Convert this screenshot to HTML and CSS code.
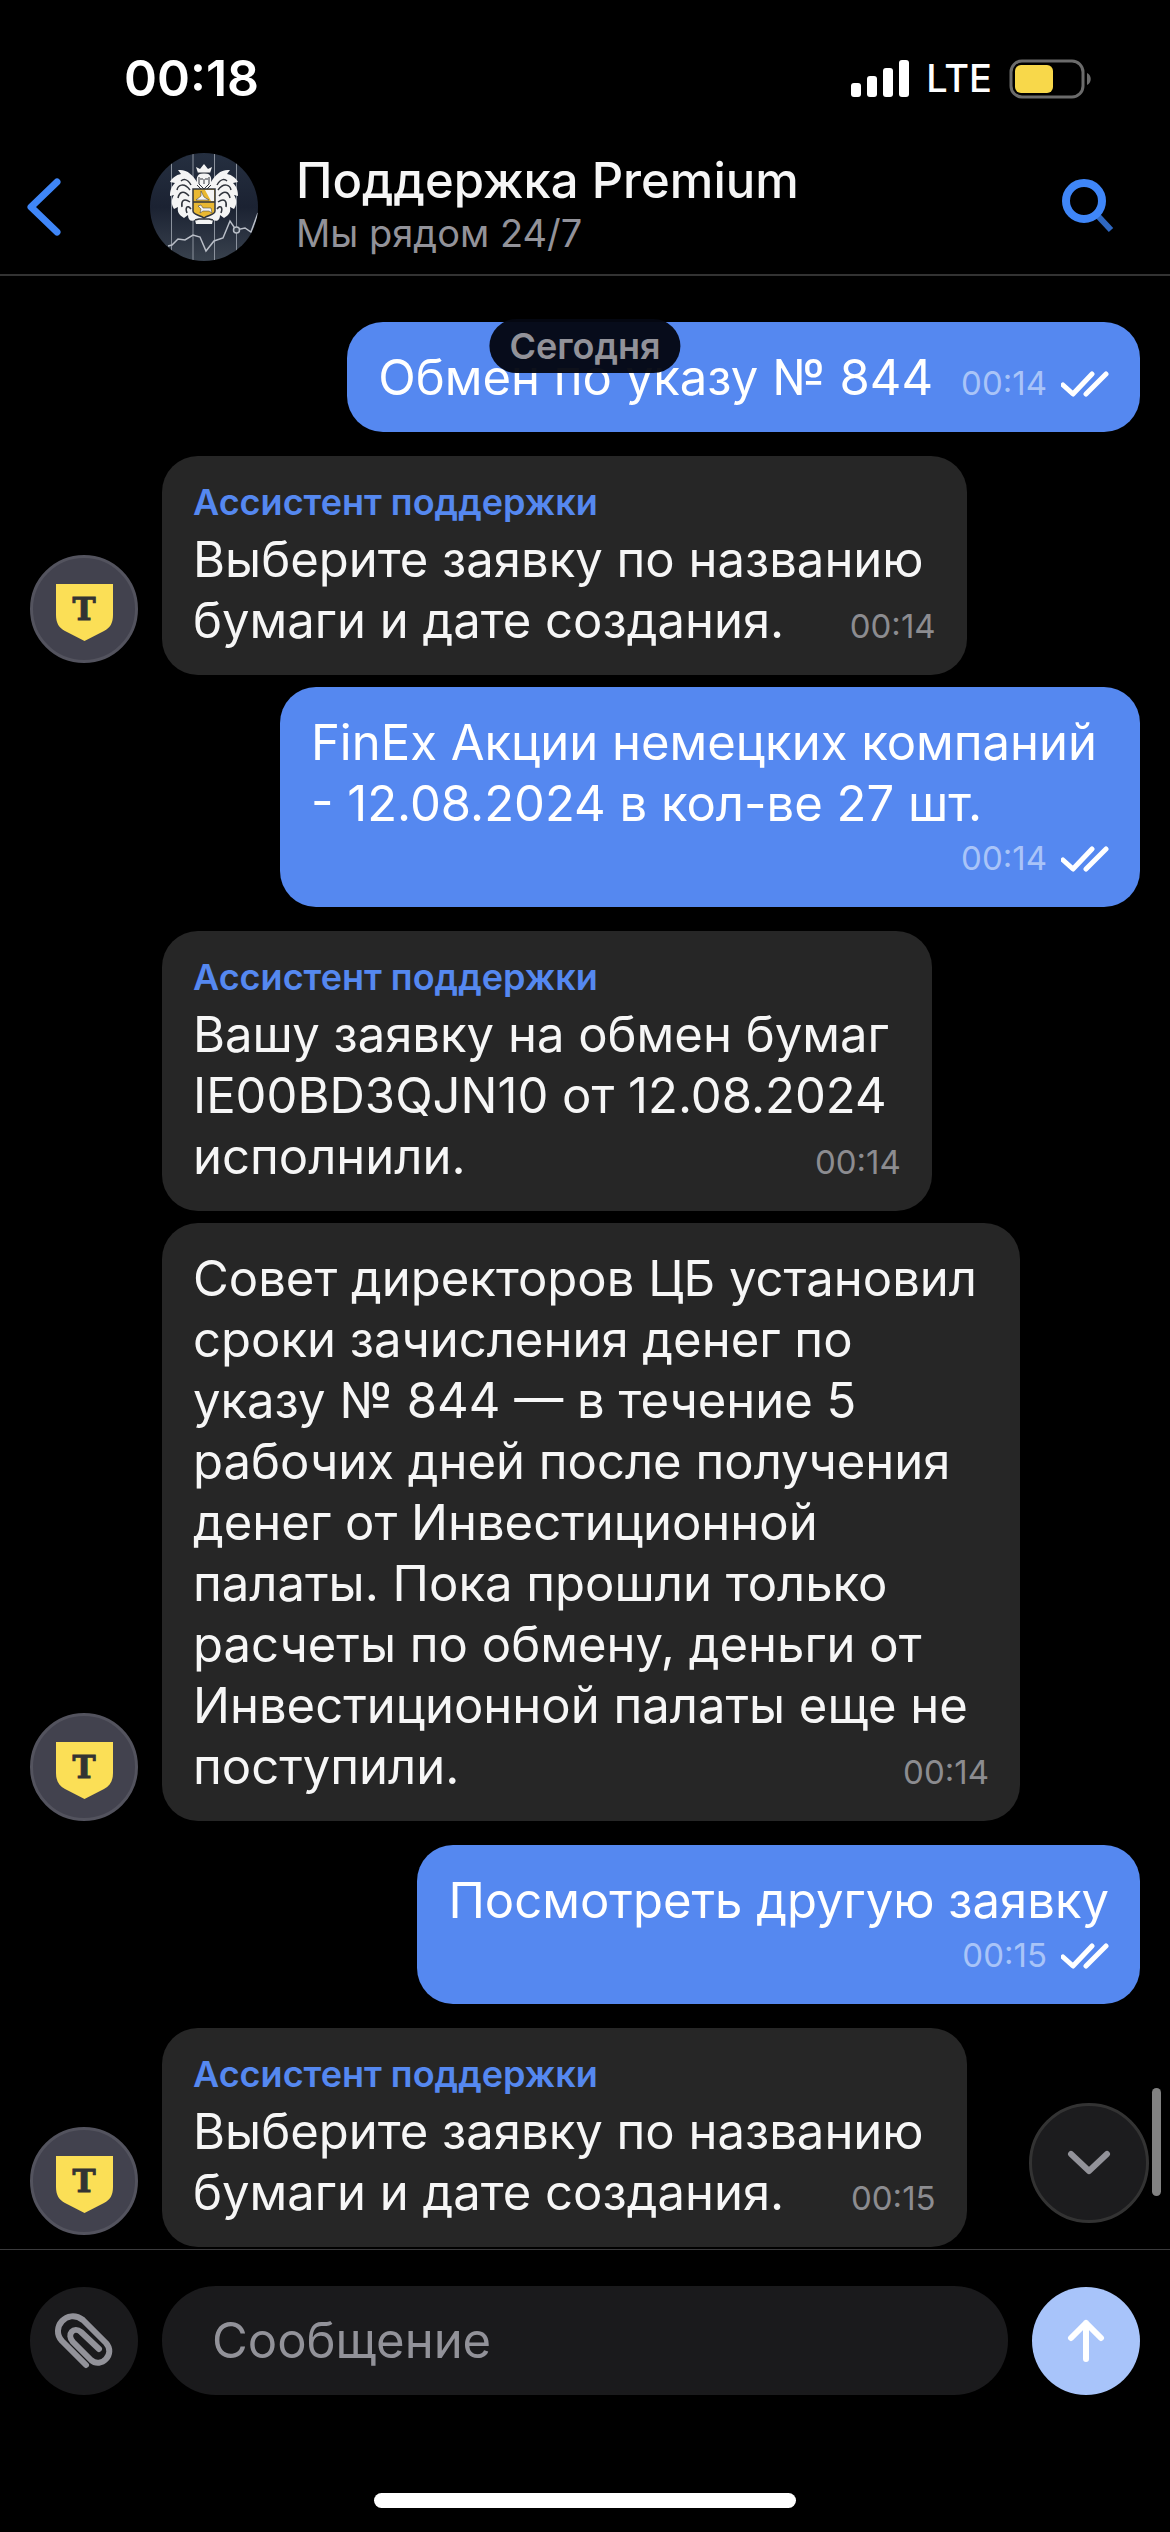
FILE: index.html
```html
<!DOCTYPE html>
<html lang="ru">
<head>
  <meta charset="UTF-8"/>
  <meta name="viewport" content="width=device-width, initial-scale=1"/>
  <title>Поддержка Premium</title>
  <link rel="stylesheet" href="styles.css">
</head>
<body>
  <!-- shared icons -->
  <svg class="defs" aria-hidden="true">
    <symbol id="ticks" viewBox="0 0 48 26">
      <path d="M2 14 L12 23 L31 3 M25 23 L45 3" fill="none" stroke="#fff" stroke-width="5" stroke-linecap="round" stroke-linejoin="round"/>
    </symbol>
    <symbol id="shield" viewBox="3 3 102 102">
      <path d="M26 29 H83 V60 C83 68 80 73 74 76 L54.500 86 L35 76 C29 73 26 68 26 60 Z" fill="#fbdf56"/>
    </symbol>
  </svg>

  <div class="status">
    <span class="clock">00:18</span>
    <div class="indicators">
      <svg width="58" height="38" viewBox="0 0 58 38" fill="#fff">
        <rect x="0" y="23" width="10" height="14" rx="3"/>
        <rect x="16" y="16" width="10" height="21" rx="3"/>
        <rect x="32" y="8" width="10" height="29" rx="3"/>
        <rect x="48" y="0" width="10" height="37" rx="3"/>
      </svg>
      <span class="network">LTE</span>
      <svg width="84" height="40" viewBox="0 0 84 40">
        <rect x="2" y="2" width="72" height="36" rx="11" fill="none" stroke="#6b6b6b" stroke-width="3"/>
        <rect x="6" y="6" width="38" height="28" rx="6" fill="#f8d84a"/>
        <path d="M78 14 C83 16 83 24 78 26 Z" fill="#6b6b6b"/>
      </svg>
    </div>
  </div>

  <header class="header">
    <button class="icon-btn back" aria-label="Назад">
      <svg width="36" height="60" viewBox="0 0 36 60"><path d="M31 5 L5 30 L31 55" fill="none" stroke="#3f86f8" stroke-width="7" stroke-linecap="round" stroke-linejoin="round"/></svg>
    </button>
    <svg class="logo" width="108" height="108" viewBox="0 0 108 108">
      <defs>
        <clipPath id="round"><circle cx="54" cy="54" r="54"/></clipPath>
        <linearGradient id="night" x1="0" y1="0" x2="0" y2="1"><stop offset="0" stop-color="#252f40"/><stop offset=".5" stop-color="#1b2232"/><stop offset="1" stop-color="#39424e"/></linearGradient>
      </defs>
      <g clip-path="url(#round)">
        <rect width="108" height="108" fill="url(#night)"/>
        <path d="M21.500 0 V108 M43 0 V108 M64.500 0 V108 M86.500 0 V108" stroke="#8b929d" stroke-width="1"/>
        <path d="M18 93 L22 92 L28 86 L35 87 L43 82 L50 84 L56 98 L64 88 L73 85 L80 68 L86 77 L95 75 L101 79 L108 60" fill="none" stroke="#b9bec7" stroke-width="1.500"/>
        <circle cx="86.500" cy="77" r="3" fill="#39424e" stroke="#b9bec7" stroke-width="1.500"/>
        <!-- mantle -->
        <path d="M54 20 C48 20 46 24 47 29 C43 22 37 16 28 17 L31 21 C26 22 22 25 20 29 L25 30 C21 34 20 38 20 43 L24 42 C21 47 21 51 24 56 L28 54 C27 59 29 62 34 65 L38 62 C38 67 41 69 45 67 L46 71 H62 L63 67 C67 69 70 67 70 62 L74 65 C79 62 81 59 80 54 L84 56 C87 51 87 47 84 42 L88 43 C88 38 87 34 83 30 L88 29 C86 25 82 22 77 21 L80 17 C71 16 65 22 61 29 C62 24 60 20 54 20 Z" fill="#f4f4f4"/>
        <path d="M41 32 C37 25 33 26 31 28 M40 37 C34 29 28 32 27 37 M39 43 C33 36 29 40 28 45 M40 49 C33 44 31 49 32 54 M41 56 C37 51 35 55 37 60 M67 32 C71 25 75 26 77 28 M68 37 C74 29 80 32 81 37 M69 43 C75 36 79 40 80 45 M68 49 C75 44 77 49 76 54 M67 56 C71 51 73 55 71 60 M45 67 L49 66 H59 L63 67" fill="none" stroke="#30343c" stroke-width="1.500"/>
        <!-- crown and face -->
        <path d="M48 20 L46 14 L50 16 L54 11 L58 16 L62 14 L60 20 Z" fill="#f4f4f4"/>
        <path d="M48 20 H60" stroke="#30343c" stroke-width="1"/>
        <path d="M49 24 V31 L54 36 L59 31 V24 M50 26 H53 M55 26 H58 M54 26 V31 M47 32 L51 36 M61 32 L57 36" fill="none" stroke="#30343c" stroke-width="1"/>
        <!-- arms -->
        <path d="M43 36 H65 V58 C65 62 58 62 54 65 C50 62 43 62 43 58 Z" fill="#e9b832" stroke="#30343c" stroke-width="1.500"/>
        <path d="M55 37 H64 V48 H61 Z" fill="#f4f4f4"/>
        <path d="M43 49 H65" stroke="#30343c" stroke-width="1.500"/>
        <path d="M46 47 L51 43 L51 38 L54 44 L59 47 Z M48 53 L51 52 L53 55 L61 55 L62 60 L59 58 L53 58 L50 60 L51 56 Z" fill="#f4f4f4" stroke="#30343c" stroke-width=".5"/>
      </g>
    </svg>
    <div class="who">
      <h1>Поддержка Premium</h1>
      <p>Мы рядом 24/7</p>
    </div>
    <button class="icon-btn" aria-label="Поиск">
      <svg width="54" height="56" viewBox="0 0 54 56" fill="none" stroke="#3f86f8">
        <path d="M36 37 L49 51" stroke="#2f68c2" stroke-width="6"/>
        <circle cx="22" cy="22" r="18" stroke-width="8"/>
      </svg>
    </button>
  </header>

  <main class="chat">
    <div class="date">Сегодня</div>

    <div class="row out">
      <div class="bubble">
        <div class="last">Обмен по указу № 844 <span class="meta">00:14 <svg class="ticks"><use href="#ticks"/></svg></span></div>
      </div>
    </div>

    <div class="row in close">
      <div class="avatar"><svg><use href="#shield"/></svg><b>T</b></div>
      <div class="bubble">
        <div class="name">Ассистент поддержки</div>
        <div class="text">Выберите заявку по названию</div>
        <div class="last">бумаги и дате создания. <span class="meta">00:14</span></div>
      </div>
    </div>

    <div class="row out">
      <div class="bubble">
        <div class="text">FinEx Акции немецких компаний<br>
        - 12.08.2024 в кол-ве 27 шт.</div>
        <div class="meta below">00:14 <svg class="ticks"><use href="#ticks"/></svg></div>
      </div>
    </div>

    <div class="row in close">
      <div class="bubble">
        <div class="name">Ассистент поддержки</div>
        <div class="text">Вашу заявку на обмен бумаг<br>
        IE00BD3QJN10 от 12.08.2024</div>
        <div class="last">исполнили. <span class="meta">00:14</span></div>
      </div>
    </div>

    <div class="row in grouped">
      <div class="avatar"><svg><use href="#shield"/></svg><b>T</b></div>
      <div class="bubble">
        <div class="text">Совет директоров ЦБ установил<br>
        сроки зачисления денег по<br>
        указу № 844 — в течение 5<br>
        рабочих дней после получения<br>
        денег от Инвестиционной<br>
        палаты. Пока прошли только<br>
        расчеты по обмену, деньги от<br>
        Инвестиционной палаты еще не</div>
        <div class="last">поступили. <span class="meta">00:14</span></div>
      </div>
    </div>

    <div class="row out">
      <div class="bubble">
        Посмотреть другую заявку
        <div class="meta below">00:15 <svg class="ticks"><use href="#ticks"/></svg></div>
      </div>
    </div>

    <div class="row in newest">
      <div class="avatar"><svg><use href="#shield"/></svg><b>T</b></div>
      <div class="bubble">
        <div class="name">Ассистент поддержки</div>
        <div class="text">Выберите заявку по названию</div>
        <div class="last">бумаги и дате создания. <span class="meta">00:15</span></div>
      </div>
    </div>

    <button class="to-bottom" aria-label="Вниз">
      <svg width="44" height="26" viewBox="0 0 44 26"><path d="M4 4 L22 21 L40 4" fill="none" stroke="#929299" stroke-width="6" stroke-linecap="round" stroke-linejoin="round"/></svg>
    </button>
    <div class="scrollbar"></div>
  </main>

  <form class="composer">
    <button type="button" class="round" aria-label="Прикрепить файл">
      <svg width="60" height="60" viewBox="0 0 60 60"><path d="M32 54 L8 30 C-4 17 13 -3 29 9 L52 32 C62 43 47 58 37 49 L19 31 C12 23 20 15 27 21 L45 38" fill="none" stroke="#929299" stroke-width="6" stroke-linecap="round" stroke-linejoin="round"/></svg>
    </button>
    <input type="text" placeholder="Сообщение" aria-label="Сообщение">
    <button type="button" class="round send" aria-label="Отправить">
      <svg width="40" height="44" viewBox="0 0 40 44"><path d="M20 40 V4 M5 19 L20 4 L35 19" fill="none" stroke="#fff" stroke-width="6" stroke-linecap="round" stroke-linejoin="round"/></svg>
    </button>
  </form>
  <div class="home"></div>
</body>
</html>
```
FILE: styles.css
```css
* { box-sizing:border-box; }
body { margin:0; min-height:100vh; display:flex; flex-direction:column; background:#000; color:#f6f6f6; font-family:Inter,"Liberation Sans",sans-serif; font-size:49px; line-height:61px; }
button { padding:0; border:0; background:none; display:flex; align-items:center; justify-content:center; }
svg { display:block; flex:none; }
.defs { display:none; }

.status { display:flex; justify-content:space-between; align-items:center; height:141px; padding:16px 77px 0 124px; color:#fff; }
.clock { font-size:50px; font-weight:600; }
.indicators { display:flex; align-items:center; gap:17px; }
.network { font-size:38px; font-weight:500; }

.header { display:flex; align-items:center; height:135px; padding:0 54px 2px 26px; border-bottom:2px solid #333; }
.back { width:36px; }
.logo { margin:0 38px 0 88px; }
.who { flex:1; padding-bottom:3px; }
.who h1 { margin:0; font-size:49px; line-height:56px; font-weight:500; }
.who p { margin:0; font-size:38px; line-height:48px; color:#929299; }

.chat { position:relative; flex:1; padding:46px 30px 2px; }
.date { position:absolute; top:43px; left:50%; transform:translateX(-50%); padding:0 20px; border-radius:27px; background:rgba(4,7,18,0.96); color:#929299; font-size:36px; line-height:54px; font-weight:600; }
.row { display:flex; align-items:flex-end; margin-bottom:24px; }
.close { margin-bottom:12px; }
.newest { margin-bottom:0; }
.out { justify-content:flex-end; }
.in { padding-left:132px; }
.avatar { display:grid; place-items:center; width:108px; height:108px; margin:0 24px 12px -132px; border:3px solid #53535e; border-radius:50%; background:#42424e; }
.avatar svg, .avatar b { grid-area:1/1; }
.avatar svg { width:102px; height:102px; }
.avatar b { color:#333; font-family:"DejaVu Serif",serif; font-size:31px; line-height:36px; -webkit-text-stroke:1px #333; }
.grouped .avatar { margin-bottom:0; }
.bubble { padding:25px 31px 24px; border-radius:36px; background:#262626; white-space:nowrap; }
.out .bubble { background:#5588f0; color:#fff; }
.name { margin-bottom:6px; color:#5588f0; font-size:36px; line-height:42px; font-weight:600; }
.text { padding-right:12px; }
.last { display:flex; justify-content:space-between; align-items:baseline; gap:28px; }
.meta { display:flex; align-items:center; gap:14px; color:#8c8c90; font-size:33px; line-height:49px; }
.last .meta { height:49px; }
.out .meta { color:#a9c4f8; }
.below { justify-content:flex-end; }
.ticks { width:48px; height:26px; }
.to-bottom { position:absolute; right:21px; bottom:26px; width:120px; height:120px; border:3px solid #333; border-radius:50%; background:#1c1c1e; }
.scrollbar { position:absolute; right:9px; bottom:53px; width:9px; height:108px; border-radius:5px; background:#828282; }

.composer { display:flex; align-items:center; gap:24px; padding:36px 30px; border-top:1px solid #3a3a3c; }
.round { width:108px; height:108px; flex:none; border-radius:50%; background:#1a1a1c; }
.send { background:#a8c4fa; }
.composer input { flex:1; min-width:0; height:109px; padding:0 50px; border:0; border-radius:54px; background:#1a1a1c; color:#fff; font:inherit; }
.composer input::placeholder { color:#929299; opacity:1; }
.home { align-self:center; width:36%; height:15px; margin:62px 0 24px; border-radius:8px; background:#fff; }
```
